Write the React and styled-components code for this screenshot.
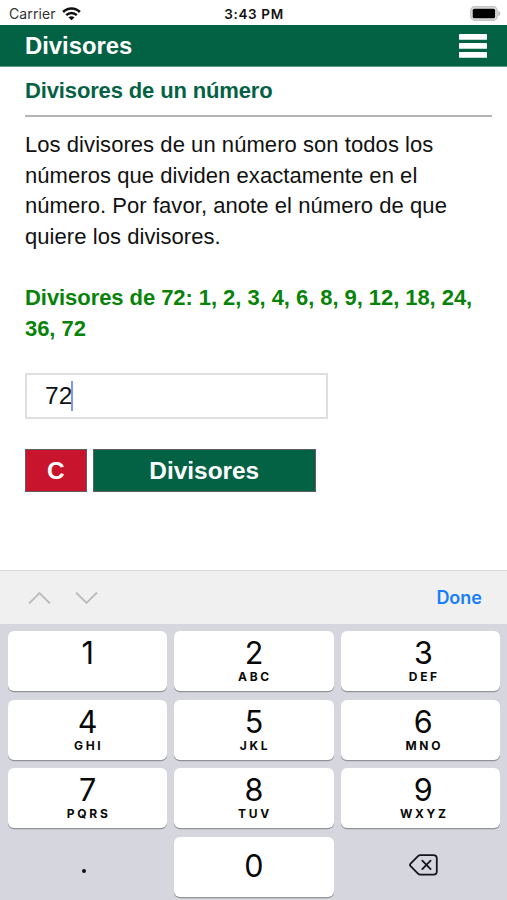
import React from "react";
import styled, { createGlobalStyle } from "styled-components";

const GlobalStyle = createGlobalStyle`
  * { box-sizing: border-box; }
  body { margin: 0; background: #fff; }
  button, input { font: inherit; margin: 0; border-radius: 0; }
`;

const Screen = styled.div`
  width: 507px;
  height: 900px;
  display: flex;
  flex-direction: column;
  overflow: hidden;
  background: #fff;
  color: #111;
  font-family: "Liberation Sans", Arial, sans-serif;
`;

const StatusBar = styled.div`
  height: 25px;
  flex: none;
  display: grid;
  grid-template-columns: 1fr auto 1fr;
  align-items: center;
  padding: 2px 6px 0 9px;
  font-family: Inter, sans-serif;
  font-size: 14px;
  line-height: 20px;
`;

const Carrier = styled.div`
  display: flex;
  align-items: center;
  gap: 6px;
  color: #333;
  letter-spacing: 0.1px;
`;

const Clock = styled.div`
  margin-left: -2px;
  font-size: 13.5px;
  font-weight: 600;
  letter-spacing: 0.65px;
`;

const Battery = styled.div`
  display: flex;
  justify-content: flex-end;
`;

const Header = styled.header`
  height: 42px;
  flex: none;
  display: flex;
  align-items: center;
  justify-content: space-between;
  padding: 1px 20px 0 25px;
  background: #046244;
  border-bottom: 1px solid #5f9c87;
  color: #fff;
`;

const Title = styled.h1`
  margin: 0;
  font-size: 23.8px;
  line-height: 28px;
`;

const MenuButton = styled.button`
  display: flex;
  padding: 0;
  border: 0;
  background: none;
`;

const Content = styled.main`
  flex: 1;
  padding: 8px 15px 0 25px;
`;

const Heading = styled.h2`
  margin: 0;
  height: 42px;
  border-bottom: 2px solid #b5b5b5;
  color: #046244;
  font-size: 22px;
  line-height: 31px;
  letter-spacing: -0.14px;
`;

const Paragraph = styled.p`
  margin: 13px 0 0;
  font-size: 22px;
  line-height: 30.6px;
  letter-spacing: 0.06px;
  white-space: nowrap;
`;

const Result = styled(Paragraph)`
  margin-top: 30.6px;
  color: #078307;
  font-weight: 700;
  letter-spacing: -0.06px;
`;

const NumberField = styled.div`
  width: 303px;
  height: 46px;
  margin-top: 29px;
  padding-left: 18px;
  display: flex;
  align-items: center;
  border: 2px solid #dedede;
  font-size: 24.5px;
`;

const Caret = styled.span`
  width: 2px;
  height: 30px;
  margin-left: -1px;
  background: #7d98ee;
`;

const Actions = styled.div`
  display: flex;
  gap: 6px;
  margin-top: 30px;
`;

const ActionButton = styled.button`
  width: ${(p) => p.$width}px;
  height: 43px;
  padding: 1px 0 0;
  border: 1px solid #5e5e5e;
  background: ${(p) => p.$color};
  color: #fff;
  font-size: 24.4px;
  font-weight: 700;
`;

const Accessory = styled.div`
  height: 54px;
  flex: none;
  display: flex;
  align-items: center;
  gap: 24px;
  padding: 0 25px 0 27.5px;
  border-top: 1px solid #d9d9d9;
  background: #f0f0f0;
`;

const Done = styled.button`
  margin-left: auto;
  padding: 0;
  border: 0;
  background: none;
  color: #167efb;
  font-family: Inter, sans-serif;
  font-size: 18px;
  font-weight: 600;
`;

const Keypad = styled.div`
  height: 276px;
  flex: none;
  display: grid;
  grid-template-columns: repeat(3, 1fr);
  grid-auto-rows: 60px;
  gap: 8.5px 7px;
  padding: 7px 7px 0 8px;
  background: #d6d7de;
  font-family: Inter, sans-serif;
`;

const Key = styled.button`
  display: flex;
  flex-direction: column;
  align-items: center;
  justify-content: ${(p) => (p.$centered ? "center" : "flex-start")};
  padding: ${(p) => (p.$centered ? "0 0 3px" : "5px 0 0")};
  border: 0;
  border-radius: 6px;
  background: ${(p) => (p.$plain ? "transparent" : "#fff")};
  box-shadow: ${(p) => (p.$plain ? "none" : "0 1.3px 0 #929399")};
  color: #080808;

  &:nth-child(3n) {
    padding-left: 6px;
  }
`;

const Digit = styled.span`
  font-size: 30.5px;
  line-height: 33px;
`;

const Letters = styled.span`
  margin-top: 1px;
  padding-left: 2px;
  font-size: 12px;
  line-height: 14px;
  font-weight: 700;
  letter-spacing: 2.7px;
`;

const Point = styled.span`
  width: 4px;
  height: 4px;
  margin: 11px 8px 0 0;
  border-radius: 50%;
  background: #111;
`;

const WifiIcon = () => (
  <svg width="19" height="14" viewBox="0 0 19 14" fill="none" stroke="#111" strokeWidth="2.5">
    <path d="M1.1 5C5.8.3 13.2.3 17.9 5" />
    <path d="M4.2 8.2C7.2 5.3 11.8 5.3 14.8 8.2" />
    <path d="M9.5 13.3 6.5 10.5C8.2 8.9 10.8 8.9 12.5 10.5Z" fill="#111" stroke="none" />
  </svg>
);

const BatteryIcon = () => (
  <svg width="31" height="15" viewBox="0 0 31 15">
    <rect x="0.8" y="0.8" width="26.4" height="13.4" rx="4" fill="#e2e2e2" stroke="#c4c4c4" strokeWidth="1.4" />
    <rect x="2.7" y="2.7" width="22.4" height="9.6" rx="1.5" fill="#000" />
    <path d="M28.3 4.8C31 5.6 31 9.4 28.3 10.2Z" fill="#bdbdbd" />
  </svg>
);

const MenuIcon = () => (
  <svg width="28" height="24" viewBox="0 0 28 24" fill="#fff">
    <rect width="28" height="5.7" rx="0.5" />
    <rect y="9" width="28" height="5.7" rx="0.5" />
    <rect y="18" width="28" height="5.7" rx="0.5" />
  </svg>
);

const Chevron = ({ points }) => (
  <svg width="23" height="14" viewBox="0 0 23 14" fill="none" stroke="#bcbcbc" strokeWidth="1.8">
    <polyline points={points} />
  </svg>
);

const BackspaceIcon = () => (
  <svg width="29" height="22" viewBox="0 0 29 22" fill="none" stroke="#15161a" strokeWidth="1.8" strokeLinecap="round" strokeLinejoin="round">
    <path d="M11.5 1.2H24.4Q27.8 1.2 27.8 4.6V17.2Q27.8 20.6 24.4 20.6H11.5Q10 20.6 9 19.6L1.6 12.2Q.4 10.9 1.6 9.6L9 2.2Q10 1.2 11.5 1.2Z" />
    <path d="M13.3 6.7 21.6 15.1M21.6 6.7 13.3 15.1" />
  </svg>
);

const keys = [
  ["1", ""], ["2", "ABC"], ["3", "DEF"],
  ["4", "GHI"], ["5", "JKL"], ["6", "MNO"],
  ["7", "PQRS"], ["8", "TUV"], ["9", "WXYZ"],
];

export default function App() {
  return (
    <Screen>
      <GlobalStyle />
      <StatusBar>
        <Carrier>Carrier <WifiIcon /></Carrier>
        <Clock>3:43 PM</Clock>
        <Battery><BatteryIcon /></Battery>
      </StatusBar>
      <Header>
        <Title>Divisores</Title>
        <MenuButton aria-label="Menú"><MenuIcon /></MenuButton>
      </Header>
      <Content>
        <Heading>Divisores de un número</Heading>
        <Paragraph>
          Los divisores de un número son todos los<br />
          números que dividen exactamente en el<br />
          número. Por favor, anote el número de que<br />
          quiere los divisores.
        </Paragraph>
        <Result>
          Divisores de 72: 1, 2, 3, 4, 6, 8, 9, 12, 18, 24,<br />
          36, 72
        </Result>
        <NumberField>72<Caret /></NumberField>
        <Actions>
          <ActionButton $width={61.5} $color="#c8142d">C</ActionButton>
          <ActionButton $width={223.5} $color="#046244">Divisores</ActionButton>
        </Actions>
      </Content>
      <Accessory>
        <Chevron points="1,12.5 11.5,2 22,12.5" />
        <Chevron points="1,1.5 11.5,12 22,1.5" />
        <Done>Done</Done>
      </Accessory>
      <Keypad>
        {keys.map(([digit, letters]) => (
          <Key key={digit}>
            <Digit>{digit}</Digit>
            {letters && <Letters>{letters}</Letters>}
          </Key>
        ))}
        <Key $plain $centered aria-label="Punto"><Point /></Key>
        <Key $centered><Digit>0</Digit></Key>
        <Key $plain $centered aria-label="Borrar"><BackspaceIcon /></Key>
      </Keypad>
    </Screen>
  );
}
